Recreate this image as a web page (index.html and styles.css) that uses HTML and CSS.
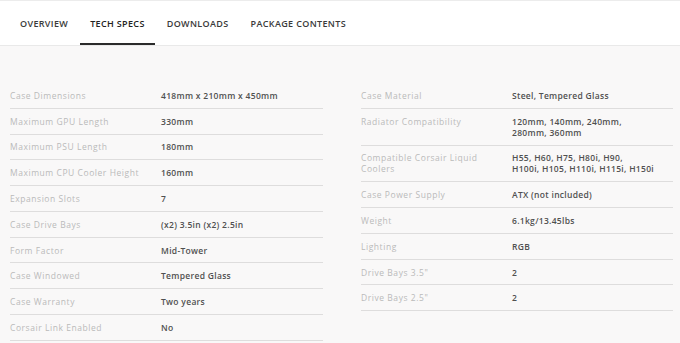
FILE: index.html
```html
<!DOCTYPE html>
<html lang="en">
<head>
<meta charset="utf-8">
<title>Tech Specs</title>
<link rel="stylesheet" href="styles.css">
</head>
<body>
<header class="tabs-bar">
  <nav class="tabs">
    <a class="tab">Overview</a>
    <a class="tab active">Tech Specs</a>
    <a class="tab">Downloads</a>
    <a class="tab">Package Contents</a>
  </nav>
</header>
<main class="specs">
  <div class="col">
    <div class="row"><div class="label">Case Dimensions</div><div class="value">418mm x 210mm x 450mm</div></div>
    <div class="row"><div class="label">Maximum GPU Length</div><div class="value">330mm</div></div>
    <div class="row"><div class="label">Maximum PSU Length</div><div class="value">180mm</div></div>
    <div class="row"><div class="label">Maximum CPU Cooler Height</div><div class="value">160mm</div></div>
    <div class="row"><div class="label">Expansion Slots</div><div class="value">7</div></div>
    <div class="row"><div class="label">Case Drive Bays</div><div class="value">(x2) 3.5in (x2) 2.5in</div></div>
    <div class="row"><div class="label">Form Factor</div><div class="value">Mid-Tower</div></div>
    <div class="row"><div class="label">Case Windowed</div><div class="value">Tempered Glass</div></div>
    <div class="row"><div class="label">Case Warranty</div><div class="value">Two years</div></div>
    <div class="row"><div class="label">Corsair Link Enabled</div><div class="value">No</div></div>
  </div>
  <div class="col">
    <div class="row"><div class="label">Case Material</div><div class="value">Steel, Tempered Glass</div></div>
    <div class="row"><div class="label">Radiator Compatibility</div><div class="value">120mm, 140mm, 240mm,<br>280mm, 360mm</div></div>
    <div class="row"><div class="label">Compatible Corsair Liquid<br>Coolers</div><div class="value">H55, H60, H75, H80i, H90,<br>H100i, H105, H110i, H115i, H150i</div></div>
    <div class="row"><div class="label">Case Power Supply</div><div class="value">ATX (not included)</div></div>
    <div class="row"><div class="label">Weight</div><div class="value">6.1kg/13.45lbs</div></div>
    <div class="row"><div class="label">Lighting</div><div class="value">RGB</div></div>
    <div class="row"><div class="label">Drive Bays 3.5"</div><div class="value">2</div></div>
    <div class="row"><div class="label">Drive Bays 2.5"</div><div class="value">2</div></div>
  </div>
</main>
</body>
</html>
```
FILE: styles.css
```css
html, body {
  margin: 0;
  padding: 0;
}
body {
  background: #f9f8f8;
  font-family: "Open Sans", "Liberation Sans", sans-serif;
  height: 343px;
  overflow: hidden;
}
.tabs-bar {
  background: #fff;
  border-top: 1px solid #ececec;
  border-bottom: 1px solid #e9e9e9;
  height: 44px;
}
.tabs {
  display: flex;
  gap: 2px;
  padding-left: 10px;
  height: 100%;
}
.tab {
  display: flex;
  align-items: center;
  padding: 2px 10px 0;
  font-size: 9px;
  font-weight: 600;
  letter-spacing: 0.35px;
  text-transform: uppercase;
  color: #3a3a3a;
  border-bottom: 2px solid transparent;
  box-sizing: border-box;
}
.tab.active {
  color: #222;
  border-bottom-color: #2b2b2b;
}
.specs {
  display: grid;
  grid-template-columns: 313px 312px;
  column-gap: 38px;
  padding: 37px 7px 0 10px;
  align-items: start;
}
.row {
  display: grid;
  grid-template-columns: 151px 1fr;
  padding: 6.9px 0;
  border-bottom: 1px solid #dedddd;
  font-size: 8.5px;
  line-height: 11px;
}
.label {
  color: #bababa;
  letter-spacing: 0.55px;
}
.value {
  color: #505050;
  font-weight: 600;
  letter-spacing: 0.3px;
}
```
